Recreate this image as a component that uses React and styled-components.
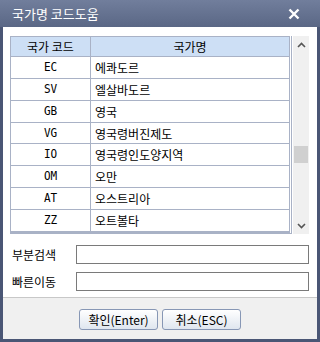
import React from "react";
import styled, { createGlobalStyle } from "styled-components";

const GlobalStyle = createGlobalStyle`
  body { margin: 0; font-family: "Noto Sans CJK KR", "Liberation Sans", sans-serif; }
`;

const rows = [
  ["EC", "에콰도르"],
  ["SV", "엘살바도르"],
  ["GB", "영국"],
  ["VG", "영국령버진제도"],
  ["IO", "영국령인도양지역"],
  ["OM", "오만"],
  ["AT", "오스트리아"],
  ["ZZ", "오트볼타"],
];

const App = () => {
  return (
    <>
      <GlobalStyle />
      <Window>
        <TitleBar>
          <span>국가명 코드도움</span>
          <svg width="12" height="12" viewBox="0 0 12 12">
            <path d="M1.5 1.5 L10.5 10.5 M10.5 1.5 L1.5 10.5" stroke="#fff" strokeWidth="2.4" />
          </svg>
        </TitleBar>
        <Body>
          <GridWrap>
            <Table>
              <HeadRow>
                <CodeCell>국가 코드</CodeCell>
                <NameCell center>국가명</NameCell>
              </HeadRow>
              {rows.map(([code, name]) => (
                <Row key={code}>
                  <CodeCell>
                    <Code>{code}</Code>
                  </CodeCell>
                  <NameCell>{name}</NameCell>
                </Row>
              ))}
            </Table>
            <Scrollbar>
              <Arrow>
                <svg width="9" height="6" viewBox="0 0 9 6">
                  <path d="M1 5 L4.5 1.5 L8 5" stroke="#555" strokeWidth="1.6" fill="none" />
                </svg>
              </Arrow>
              <Track>
                <Thumb />
              </Track>
              <Arrow>
                <svg width="9" height="6" viewBox="0 0 9 6">
                  <path d="M1 1 L4.5 4.5 L8 1" stroke="#555" strokeWidth="1.6" fill="none" />
                </svg>
              </Arrow>
            </Scrollbar>
          </GridWrap>
          <Form>
            <FieldRow>
              <Label>부분검색</Label>
              <Input />
            </FieldRow>
            <FieldRow>
              <Label>빠른이동</Label>
              <Input />
            </FieldRow>
          </Form>
          <Footer>
            <Button>확인(Enter)</Button>
            <Button>취소(ESC)</Button>
          </Footer>
        </Body>
      </Window>
    </>
  );
};

const Window = styled.div`
  width: 320px;
  height: 342px;
  box-sizing: border-box;
  background: #4a5675;
  padding: 0 3px 3px;
  display: flex;
  flex-direction: column;
`;

const TitleBar = styled.div`
  height: 27px;
  margin: 0 -3px;
  padding: 0 20px 0 12px;
  display: flex;
  align-items: center;
  justify-content: space-between;
  background: linear-gradient(#717e9c, #5a6785);
  color: #fff;
  font-size: 13px;
`;

const Body = styled.div`
  flex: 1;
  background: #fff;
  display: flex;
  flex-direction: column;
`;

const GridWrap = styled.div`
  display: flex;
  margin: 9px 8px 0 7px;
  height: 198px;
`;

const Table = styled.div`
  flex: 1;
  border-left: 1px solid #a9b2c6;
  border-right: 3px double #a9b2c6;
  border-bottom: 2px solid #a9b2c6;
  display: flex;
  flex-direction: column;
`;

const Row = styled.div`
  display: flex;
  height: 22px;
  box-sizing: border-box;
  border-bottom: 1px solid #a9b2c6;
  font-size: 12px;
  align-items: center;
`;

const HeadRow = styled(Row)`
  height: 21px;
  border-top: 1px solid #a9b2c6;
  background: #cddff5;
`;

const CodeCell = styled.div`
  width: 79px;
  height: 100%;
  display: flex;
  align-items: center;
  justify-content: center;
  border-right: 1px solid #a9b2c6;
`;

const Code = styled.span`
  font-family: "DejaVu Sans Mono", monospace;
  font-size: 11px;
  display: inline-block;
  transform: scaleY(1.1);
`;

const NameCell = styled.div`
  flex: 1;
  padding-left: ${(p) => (p.center ? "0" : "4px")};
  text-align: ${(p) => (p.center ? "center" : "left")};
`;

const Scrollbar = styled.div`
  width: 16px;
  margin-left: 1px;
  background: #f0f0f0;
  display: flex;
  flex-direction: column;
`;

const Arrow = styled.div`
  height: 17px;
  display: flex;
  align-items: center;
  justify-content: center;
`;

const Track = styled.div`
  flex: 1;
  position: relative;
`;

const Thumb = styled.div`
  position: absolute;
  top: 93px;
  left: 1px;
  right: 1px;
  height: 17px;
  background: #d0d0d0;
`;

const Form = styled.div`
  padding: 11px 8px 0 9px;
  display: flex;
  flex-direction: column;
  gap: 8px;
`;

const FieldRow = styled.div`
  display: flex;
  align-items: center;
`;

const Label = styled.div`
  width: 64px;
  font-size: 12px;
`;

const Input = styled.div`
  flex: 1;
  height: 17px;
  border: 1px solid #7a7a7a;
`;

const Footer = styled.div`
  margin-top: auto;
  height: 42px;
  box-sizing: border-box;
  border-top: 1px solid #c8c8c8;
  background: #f0f0f0;
  display: flex;
  justify-content: center;
  align-items: center;
  gap: 4px;
  padding-top: 1px;
`;

const Button = styled.button`
  width: 79px;
  height: 21px;
  padding: 0;
  border: 1px solid #8797b5;
  border-radius: 3px;
  background: linear-gradient(#ffffff, #dfe6ef);
  font-family: "Noto Sans CJK KR", "Liberation Sans", sans-serif;
  font-size: 12px;
  color: #000;
`;

export default App;
